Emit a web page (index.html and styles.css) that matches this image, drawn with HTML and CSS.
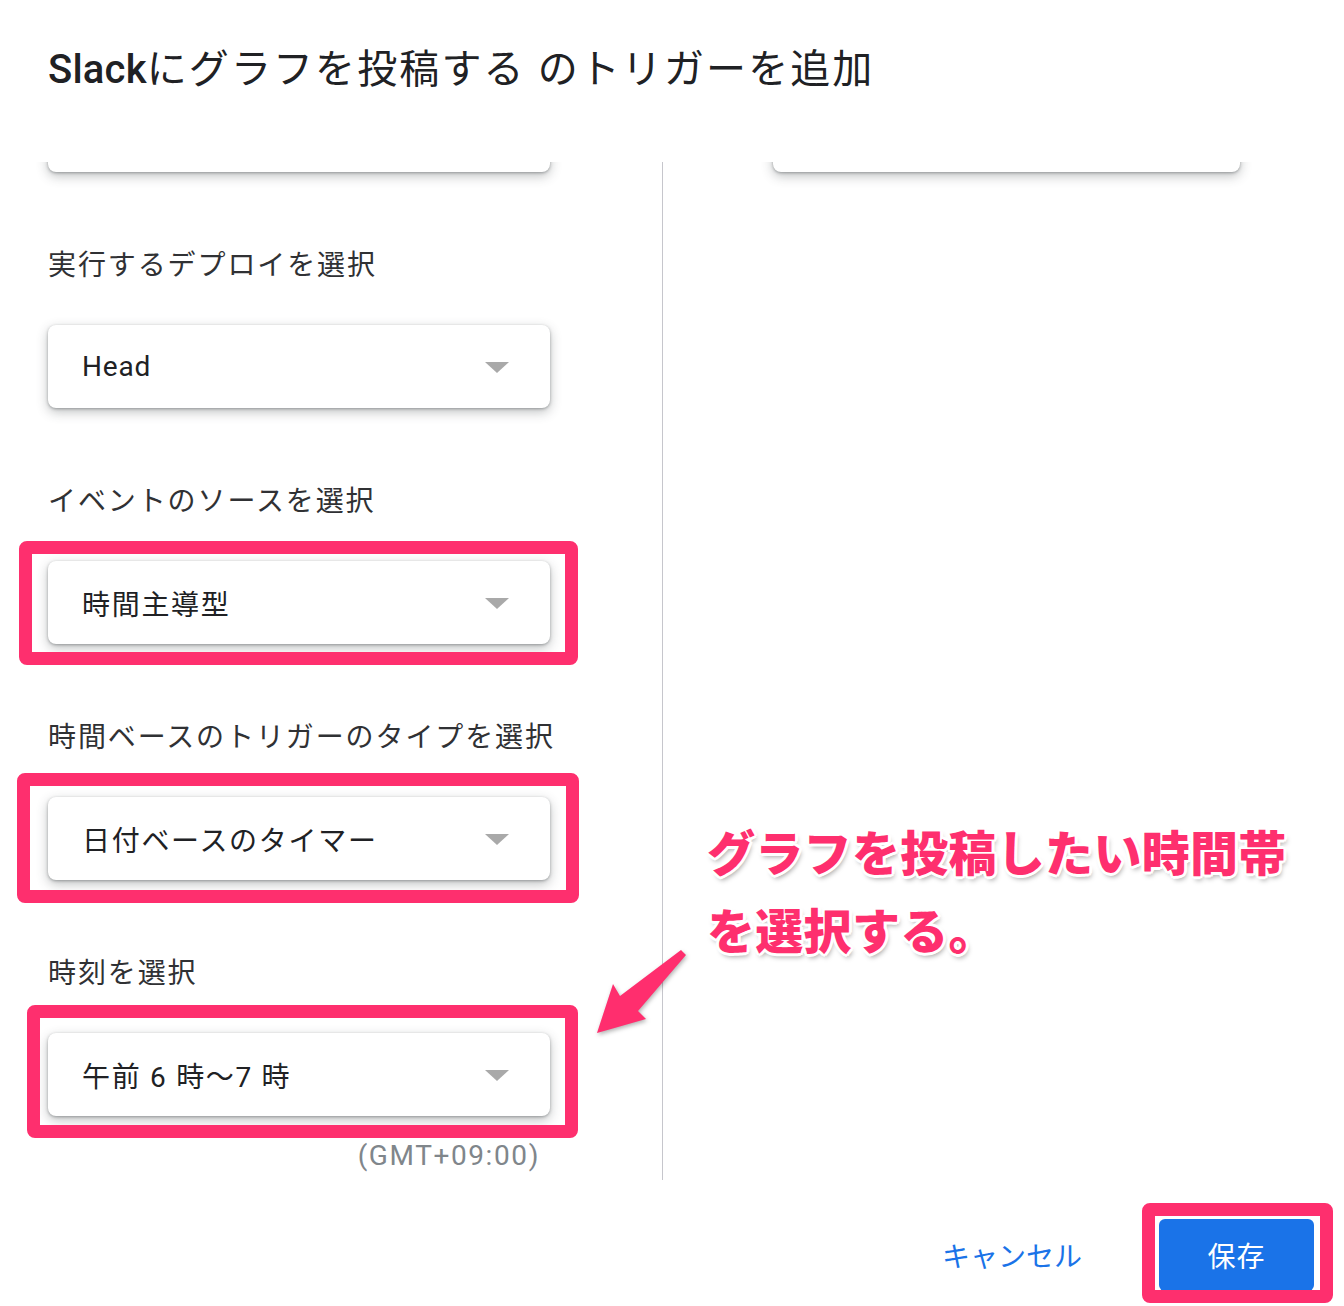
FILE: index.html
```html
<!DOCTYPE html>
<html lang="ja">
<head>
    <meta charset="utf-8">
    <title>トリガーを追加</title>
    <link rel="stylesheet" href="styles.css">
</head>
<body>
    <div class="dialog">
        <h1 class="title"><span class="latin">Slack</span>にグラフを投稿する のトリガーを追加</h1>

        <div class="content">
            <div class="col col-left">
                <div class="card stub"></div>

                <div class="field">
                    <div class="label">実行するデプロイを選択</div>
                    <div class="card select"><span class="latin">Head</span><span class="caret"></span></div>
                </div>

                <div class="field">
                    <div class="label">イベントのソースを選択</div>
                    <div class="card select"><span>時間主導型</span><span class="caret"></span>
                        <div class="mark mark-1"></div>
                    </div>
                </div>

                <div class="field">
                    <div class="label">時間ベースのトリガーのタイプを選択</div>
                    <div class="card select"><span>日付ベースのタイマー</span><span class="caret"></span>
                        <div class="mark mark-2"></div>
                    </div>
                </div>

                <div class="field">
                    <div class="label">時刻を選択</div>
                    <div class="card select"><span>午前 6 時〜7 時</span><span class="caret"></span>
                        <div class="mark mark-3"></div>
                    </div>
                </div>

                <div class="tz">(GMT+09:00)</div>
            </div>

            <div class="col col-right">
                <div class="card stub stub-right"></div>
            </div>

            <!-- annotation -->
            <div class="note">グラフを投稿したい時間帯<br>を選択する。</div>
            <svg class="note-arrow" width="110" height="110" viewBox="585 935 110 110">
                <polygon points="681,950 686,955 638,1011 646,1019 597,1033 613,984 620,996" fill="#ff2e6e"/>
            </svg>
        </div>

        <div class="actions">
            <span class="btn-cancel">キャンセル</span>
            <span class="btn-save">保存
                <span class="mark mark-save"></span>
            </span>
        </div>
    </div>
</body>
</html>
```

FILE: styles.css
```css
body {
    margin: 0;
    background-color: #fff;
    font-family: Roboto, "Noto Sans CJK JP", sans-serif;
    color: #202124;
}

.dialog {
    width: 1344px;
    height: 1306px;
    overflow: hidden;
}

.title {
    margin: 0;
    padding: 46px 0 0 48px;
    height: 116px;
    font-size: 40px;
    font-weight: 400;
    line-height: 48px;
    color: #202124;
    letter-spacing: 2.1px;
}

.title .latin {
    font-weight: 500;
    letter-spacing: 0.2px;
}

.content {
    position: relative;
    height: 1018px;
    overflow: hidden;
    display: flex;
}

.col-left {
    width: 614px;
    padding-left: 48px;
    border-right: 1px solid #c6c6cc;
}

.col-right {
    flex: 1;
    padding-left: 110px;
}

.card {
    background-color: #fff;
    border-radius: 8px;
    box-shadow: 0 1px 3px rgba(60, 64, 67, 0.4), 0 4px 12px rgba(60, 64, 67, 0.32);
}

.stub {
    width: 502px;
    height: 83px;
    margin-top: -73px;
}

.stub-right {
    width: 467px;
}

.field {
    margin-top: 74px;
}

.label {
    font-size: 28px;
    line-height: 40px;
    margin-bottom: 39px;
    color: #303134;
    letter-spacing: 1.9px;
}

.select {
    position: relative;
    width: 502px;
    height: 83px;
    box-sizing: border-box;
    padding: 0 41px 0 34px;
    display: flex;
    align-items: center;
    justify-content: space-between;
    font-size: 28px;
    color: #202124;
    letter-spacing: 1.7px;
}

.select .latin {
    letter-spacing: 0.8px;
}

.caret {
    width: 0;
    height: 0;
    border-left: 12px solid transparent;
    border-right: 12px solid transparent;
    border-top: 11px solid #a9a9a9;
    margin-top: 2px;
}

.mark {
    position: absolute;
    border: 13px solid #fe2f6e;
    border-radius: 8px;
}

.mark-1 {
    left: -29px;
    top: -20px;
    right: -28px;
    bottom: -21px;
}

.mark-2 {
    left: -31px;
    top: -24px;
    right: -29px;
    bottom: -23px;
}

.mark-3 {
    left: -21px;
    top: -28px;
    right: -28px;
    bottom: -22px;
}

.tz {
    width: 492px;
    margin-top: 20px;
    text-align: right;
    font-size: 28px;
    line-height: 40px;
    color: #80868b;
    letter-spacing: 1.6px;
}

.note {
    position: absolute;
    left: 707px;
    top: 654px;
    font-size: 48px;
    font-weight: 900;
    line-height: 78px;
    color: #fe2f6e;
    letter-spacing: 0.3px;
    text-shadow:
        3px 0 0 #fff, -3px 0 0 #fff, 0 3px 0 #fff, 0 -3px 0 #fff,
        2px 2px 0 #fff, -2px 2px 0 #fff, 2px -2px 0 #fff, -2px -2px 0 #fff,
        2px 4px 5px rgba(0, 0, 0, 0.35);
}

.note-arrow {
    position: absolute;
    left: 585px;
    top: 773px;
    filter: drop-shadow(1px 2px 2px rgba(0, 0, 0, 0.3));
}

.actions {
    display: flex;
    justify-content: flex-end;
    align-items: center;
    padding: 39px 30px 0 0;
}

.btn-cancel {
    font-size: 28px;
    color: #1a73e8;
    margin-right: 77px;
}

.btn-save {
    position: relative;
    width: 155px;
    height: 72px;
    display: flex;
    align-items: center;
    justify-content: center;
    background-color: #1a73e8;
    border-radius: 6px;
    color: #fff;
    font-size: 28px;
    letter-spacing: 1px;
}

.mark-save {
    left: -17px;
    top: -16px;
    right: -19px;
    bottom: -12px;
}
```
